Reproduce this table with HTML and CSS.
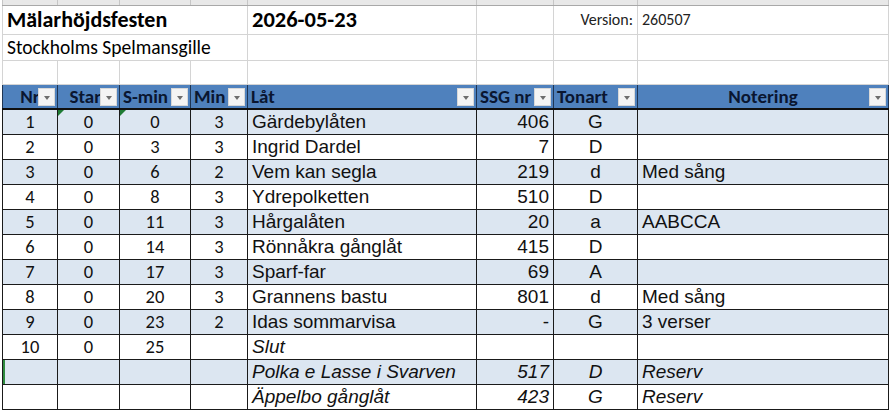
FILE: index.html
```html
<!DOCTYPE html>
<html lang="sv">
<head>
<meta charset="utf-8">
<title>Mälarhöjdsfesten</title>
<link rel="stylesheet" href="styles.css">
</head>
<body>
<table class="sheet">
  <colgroup>
    <col class="c-a"><col class="c-b"><col class="c-c"><col class="c-d">
    <col class="c-e"><col class="c-f"><col class="c-g"><col class="c-h">
  </colgroup>
  <tr class="strip"><td></td><td></td><td></td><td></td><td></td><td></td><td></td><td></td></tr>
  <tr class="r-title">
    <td colspan="4" class="title">Mälarhöjdsfesten</td>
    <td class="date">2026-05-23</td>
    <td></td>
    <td class="ver-label">Version:</td>
    <td class="ver">260507</td>
  </tr>
  <tr class="r-sub">
    <td colspan="4" class="sub">Stockholms Spelmansgille</td>
    <td></td><td></td><td></td><td></td>
  </tr>
  <tr class="r-empty"><td></td><td></td><td></td><td></td><td></td><td></td><td></td><td></td></tr>
  <tr class="head">
    <th class="hc">Nr<span class="dd"></span></th>
    <th class="hc">Start<span class="dd"></span></th>
    <th>S-min<span class="dd"></span></th>
    <th>Min<span class="dd"></span></th>
    <th>Låt<span class="dd"></span></th>
    <th>SSG nr<span class="dd"></span></th>
    <th>Tonart<span class="dd"></span></th>
    <th class="hc">Notering<span class="dd"></span></th>
  </tr>
  <tr class="row band">
    <td class="n">1</td><td class="n err">0</td><td class="n err">0</td><td class="n">3</td>
    <td class="t">Gärdebylåten</td><td class="s">406</td><td class="k">G</td><td class="t"></td>
  </tr>
  <tr class="row">
    <td class="n">2</td><td class="n">0</td><td class="n">3</td><td class="n">3</td>
    <td class="t">Ingrid Dardel</td><td class="s">7</td><td class="k">D</td><td class="t"></td>
  </tr>
  <tr class="row band">
    <td class="n">3</td><td class="n">0</td><td class="n">6</td><td class="n">2</td>
    <td class="t">Vem kan segla</td><td class="s">219</td><td class="k">d</td><td class="t">Med sång</td>
  </tr>
  <tr class="row">
    <td class="n">4</td><td class="n">0</td><td class="n">8</td><td class="n">3</td>
    <td class="t">Ydrepolketten</td><td class="s">510</td><td class="k">D</td><td class="t"></td>
  </tr>
  <tr class="row band">
    <td class="n">5</td><td class="n">0</td><td class="n">11</td><td class="n">3</td>
    <td class="t">Hårgalåten</td><td class="s">20</td><td class="k">a</td><td class="t">AABCCA</td>
  </tr>
  <tr class="row">
    <td class="n">6</td><td class="n">0</td><td class="n">14</td><td class="n">3</td>
    <td class="t">Rönnåkra gånglåt</td><td class="s">415</td><td class="k">D</td><td class="t"></td>
  </tr>
  <tr class="row band">
    <td class="n">7</td><td class="n">0</td><td class="n">17</td><td class="n">3</td>
    <td class="t">Sparf-far</td><td class="s">69</td><td class="k">A</td><td class="t"></td>
  </tr>
  <tr class="row">
    <td class="n">8</td><td class="n">0</td><td class="n">20</td><td class="n">3</td>
    <td class="t">Grannens bastu</td><td class="s">801</td><td class="k">d</td><td class="t">Med sång</td>
  </tr>
  <tr class="row band">
    <td class="n">9</td><td class="n">0</td><td class="n">23</td><td class="n">2</td>
    <td class="t">Idas sommarvisa</td><td class="s">-</td><td class="k">G</td><td class="t">3 verser</td>
  </tr>
  <tr class="row">
    <td class="n">10</td><td class="n">0</td><td class="n">25</td><td class="n"></td>
    <td class="t it">Slut</td><td class="s"></td><td class="k"></td><td class="t"></td>
  </tr>
  <tr class="row band">
    <td class="n sel"></td><td class="n"></td><td class="n"></td><td class="n"></td>
    <td class="t it">Polka e Lasse i Svarven</td><td class="s it">517</td><td class="k it">D</td><td class="t it">Reserv</td>
  </tr>
  <tr class="row">
    <td class="n"></td><td class="n"></td><td class="n"></td><td class="n"></td>
    <td class="t it">Äppelbo gånglåt</td><td class="s it">423</td><td class="k it">G</td><td class="t it">Reserv</td>
  </tr>
</table>
</body>
</html>
```

FILE: styles.css
```css
* { box-sizing: border-box; }
html, body { margin: 0; padding: 0; background: #ffffff; }
body { padding-left: 2px; overflow: hidden; }

.sheet {
  border-collapse: collapse;
  table-layout: fixed;
  width: 886px;
  font-family: "Liberation Sans", Arial, sans-serif;
  color: #111;
}
.c-a { width: 55px; }
.c-b { width: 62px; }
.c-c { width: 71px; }
.c-d { width: 57px; }
.c-e { width: 229px; }
.c-f { width: 77px; }
.c-g { width: 84px; }
.c-h { width: 251px; }

.sheet td, .sheet th {
  padding: 0 4px;
  white-space: nowrap;
  overflow: hidden;
  border: 1px solid #d4d4d4;
}

.strip td {
  height: 5px;
  padding: 0;
  background: #e8e8e8;
  border-top: none;
  border-color: #c6c6c6;
  border-bottom: 1px solid #a8a8a8;
}

.r-title td { height: 29px; }
.r-sub td { height: 26px; }
.r-empty td { height: 24px; }

.title {
  font-family: Carlito, Lato, "Open Sans", sans-serif;
  font-weight: 700;
  font-size: 22px;
  color: #000;
  padding-left: 4px;
}
.date {
  font-family: Carlito, Lato, "Open Sans", sans-serif;
  font-weight: 700;
  font-size: 22.5px;
  color: #000;
}
.ver-label {
  font-family: Carlito, Lato, "Open Sans", sans-serif;
  font-size: 16px;
  text-align: right;
  color: #222;
}
.ver {
  font-family: Carlito, Lato, "Open Sans", sans-serif;
  font-size: 16px;
  color: #222;
}
.sub {
  font-family: Carlito, Lato, "Open Sans", sans-serif;
  font-size: 19.5px;
  color: #000;
}

.head th {
  position: relative;
  height: 25px;
  background: #4f81bd;
  color: #0a1630;
  font-family: Carlito, Lato, "Open Sans", sans-serif;
  font-weight: 700;
  font-size: 19px;
  text-align: left;
  padding: 0 3px;
  border: 1px solid #1f3553;
  border-top-color: #4f81bd;
  border-bottom: 2px solid #101010;
}
.head th.hc { text-align: center; }

.dd {
  position: absolute;
  right: 2px;
  top: 3px;
  width: 17px;
  height: 18px;
  background: #f4f4f4;
  border: 1px solid #d8d8d8;
}
.dd::after {
  content: "";
  position: absolute;
  left: 5px;
  top: 7px;
  border-left: 3px solid transparent;
  border-right: 3px solid transparent;
  border-top: 4px solid #6d6d6d;
}

.row td {
  height: 25px;
  border: 1px solid #1a1a1a;
  font-size: 19px;
  color: #111;
}
.row.band td { background: #dce6f1; }

.row td.n {
  font-family: Carlito, Lato, "Open Sans", sans-serif;
  font-size: 18.5px;
  text-align: center;
}
.row td.t { text-align: left; padding-left: 4px; }
.row td.s { text-align: right; padding-right: 4px; }
.row td.k { text-align: center; }
.row td.it { font-style: italic; }

.row td.err { position: relative; }
.row td.err::before {
  content: "";
  position: absolute;
  left: 0;
  top: 0;
  border-top: 6px solid #1e7b34;
  border-right: 6px solid transparent;
}

.row td.sel { box-shadow: inset 2px 0 0 #2e8b3e; }
```
